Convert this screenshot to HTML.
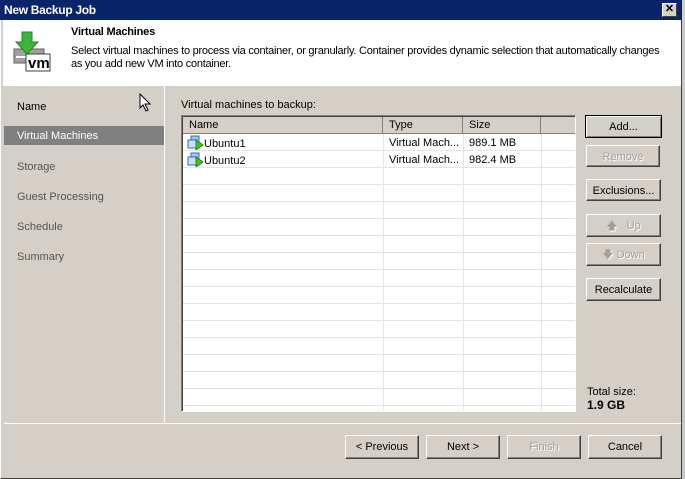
<!DOCTYPE html><html><head><style>
*{margin:0;padding:0;box-sizing:border-box}
body{width:685px;height:479px;background:#d4d0c8;font-family:"Liberation Sans",sans-serif;font-size:11px;position:relative;overflow:hidden;color:#000}
.a{position:absolute}
.btn{position:absolute;background:#d4d0c8;border:1px solid;border-color:#fff #404040 #404040 #fff;box-shadow:inset -1px -1px 0 #808080;text-align:center;font-size:11px;line-height:22px}
.dis{color:#a0a0a0;text-shadow:1px 1px 0 #fff}
.nav{position:absolute;left:17px;font-size:11px;color:#555}
</style></head><body>
<div class="a" style="left:0;top:0;width:682px;height:479px;border:1px solid #404040;border-top:none;border-left:1px solid #fff"></div>
<div class="a" style="left:0;top:0;width:682px;height:20px;background:#0a246a;color:#fff;font-weight:bold;font-size:12px;line-height:21px;padding-left:4px;letter-spacing:-0.3px">New Backup Job</div>
<div class="a" style="left:662px;top:3px;width:15px;height:14px;background:#d4d0c8;border:1px solid;border-color:#fff #404040 #404040 #fff;font-size:11px;line-height:11px;text-align:center;font-weight:bold">✕</div>
<div class="a" style="left:682px;top:20px;width:3px;height:459px;background:#c8c8c8"></div>
<div class="a" style="left:3px;top:20px;width:678px;height:66px;background:#fff"></div>
<svg class="a" style="left:12px;top:30px" width="40" height="44" viewBox="0 0 40 44">
<rect x="2" y="19" width="30" height="14" fill="#a0a0a0" stroke="#606060"/>
<rect x="4" y="26" width="12" height="2" fill="#fff"/>
<polygon points="10,2 20,2 20,12 26,12 15,24 4,12 10,12" fill="#3cb43c" stroke="#1e8a1e"/>
<rect x="14" y="24" width="24" height="17" fill="#fff" stroke="#404040"/>
<text x="16" y="38" font-family="Liberation Sans" font-weight="bold" font-size="15">vm</text>
</svg>
<div class="a" style="left:71px;top:26px;font-weight:bold;font-size:11px;letter-spacing:-0.2px">Virtual Machines</div>
<div class="a" style="left:71px;top:45px;width:600px;font-size:11px;line-height:13px;letter-spacing:-0.25px">Select virtual machines to process via container, or granularly. Container provides dynamic selection that automatically changes<br>as you add new VM into container.</div>
<div class="a" style="left:164px;top:86px;width:1px;height:337px;background:#fff"></div>
<div class="a" style="left:4px;top:423px;width:677px;height:1px;background:#fff"></div>
<div class="nav" style="top:101px;color:#000">Name</div>
<div class="a" style="left:4px;top:126px;width:160px;height:19px;background:#808080"></div>
<div class="nav" style="top:130px;color:#fff">Virtual Machines</div>
<div class="nav" style="top:161px">Storage</div>
<div class="nav" style="top:191px">Guest Processing</div>
<div class="nav" style="top:221px">Schedule</div>
<div class="nav" style="top:251px">Summary</div>
<svg class="a" style="left:139px;top:93px" width="14" height="20"><polygon points="1,1 1,15 4,12 7,18 9,17 6,11 11,11" fill="#fff" stroke="#000"/></svg>
<div class="a" style="left:181px;top:99px">Virtual machines to backup:</div>
<div class="a" style="left:181px;top:115px;width:395px;height:297px;background:#fff;border:1px solid;border-color:#808080 #fff #fff #808080;box-shadow:inset 1px 1px 0 #404040;overflow:hidden">
<div class="a" style="left:1px;top:1px;width:395px;height:17px;background:#d4d0c8"></div>
<div class="a" style="left:1px;top:1px;width:200px;height:17px;border-right:1px solid #808080;border-bottom:1px solid #808080;padding-left:6px;line-height:17px">Name</div>
<div class="a" style="left:201px;top:1px;width:80px;height:17px;border-right:1px solid #808080;border-bottom:1px solid #808080;padding-left:6px;line-height:17px">Type</div>
<div class="a" style="left:281px;top:1px;width:78px;height:17px;border-right:1px solid #808080;border-bottom:1px solid #808080;padding-left:6px;line-height:17px">Size</div>
<div class="a" style="left:359px;top:1px;width:36px;height:17px;border-bottom:1px solid #808080"></div>
<div class="a" style="left:1px;top:18px;width:393px;height:280px;background:repeating-linear-gradient(to bottom,transparent 0,transparent 16px,#e4e4e4 16px,#e4e4e4 17px)"></div>
<div class="a" style="left:201px;top:18px;width:1px;height:280px;background:#e4e4e4"></div>
<div class="a" style="left:281px;top:18px;width:1px;height:280px;background:#e4e4e4"></div>
<div class="a" style="left:359px;top:18px;width:1px;height:280px;background:#e4e4e4"></div>
<div class="a" style="left:5px;top:19px;line-height:16px"><svg width="17" height="15" style="vertical-align:-3px"><rect x="4" y="1" width="8" height="7" fill="#9cc8f0" stroke="#2a6fb8"/><rect x="1" y="5" width="9" height="8" fill="#c8e2fa" stroke="#2a6fb8"/><polygon points="9,5 16,10 9,15" fill="#4ac020" stroke="#2a8010"/></svg>Ubuntu1</div>
<div class="a" style="left:207px;top:19px;line-height:16px">Virtual Mach...</div>
<div class="a" style="left:287px;top:19px;line-height:16px">989.1 MB</div>
<div class="a" style="left:5px;top:36px;line-height:16px"><svg width="17" height="15" style="vertical-align:-3px"><rect x="4" y="1" width="8" height="7" fill="#9cc8f0" stroke="#2a6fb8"/><rect x="1" y="5" width="9" height="8" fill="#c8e2fa" stroke="#2a6fb8"/><polygon points="9,5 16,10 9,15" fill="#4ac020" stroke="#2a8010"/></svg>Ubuntu2</div>
<div class="a" style="left:207px;top:36px;line-height:16px">Virtual Mach...</div>
<div class="a" style="left:287px;top:36px;line-height:16px">982.4 MB</div>
</div>
<div class="btn" style="left:585px;top:115px;width:77px;height:23px;border:1px solid #000;box-shadow:inset 1px 1px 0 #fff,inset -1px -1px 0 #808080">Add...</div>
<div class="btn dis" style="left:586px;top:145px;width:74px;height:22px">Remove</div>
<div class="btn" style="left:586px;top:179px;width:75px;height:22px">Exclusions...</div>
<div class="btn dis" style="left:586px;top:214px;width:75px;height:23px">🡅&nbsp;&nbsp; Up</div>
<div class="btn dis" style="left:586px;top:243px;width:75px;height:23px">🡇 Down</div>
<div class="btn" style="left:586px;top:278px;width:75px;height:23px">Recalculate</div>
<div class="a" style="left:587px;top:386px">Total size:</div>
<div class="a" style="left:587px;top:398px;font-weight:bold;font-size:12px">1.9 GB</div>
<div class="btn" style="left:345px;top:435px;width:74px;height:24px">&lt; Previous</div>
<div class="btn" style="left:426px;top:435px;width:74px;height:24px">Next &gt;</div>
<div class="btn dis" style="left:507px;top:435px;width:74px;height:24px">Finish</div>
<div class="btn" style="left:588px;top:435px;width:74px;height:24px">Cancel</div>
</body></html>
